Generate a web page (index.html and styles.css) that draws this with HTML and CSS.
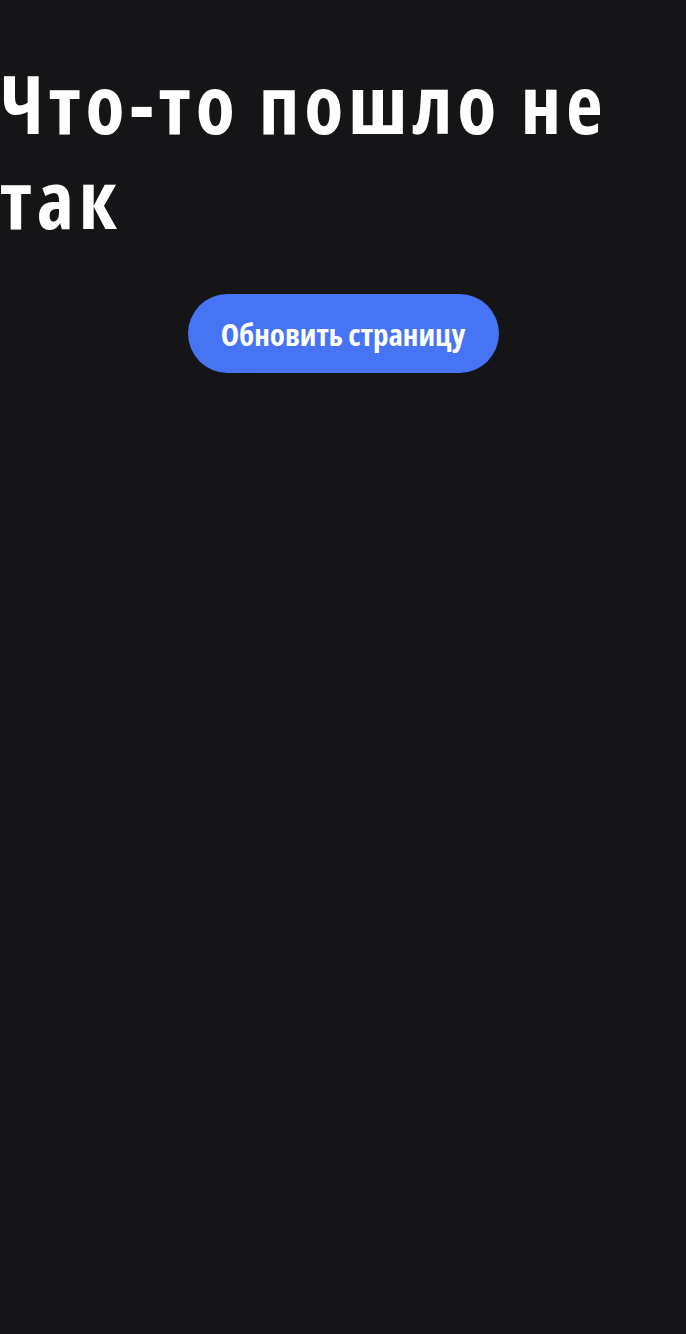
FILE: index.html
```html
<!DOCTYPE html>
<html lang="ru">
<head>
<meta charset="utf-8">
<link rel="stylesheet" href="styles.css">
</head>
<body>
<main class="page">
  <h1 class="title">Что-то пошло не так</h1>
  <div class="actions">
    <button class="reload">Обновить страницу</button>
  </div>
</main>
</body>
</html>
```
FILE: styles.css
```css
html, body {
  margin: 0;
  padding: 0;
  background: #151517;
  height: 100%;
}
.page {
  padding-top: 55px;
}
.title {
  margin: 0;
  color: #ffffff;
  font-family: "Open Sans", "DejaVu Sans Condensed", sans-serif;
  font-weight: 700;
  font-stretch: 75%;
  font-size: 80px;
  line-height: 95px;
  letter-spacing: 5px;
}
.actions {
  display: flex;
  justify-content: center;
  margin-top: 49px;
}
.reload {
  width: 311px;
  height: 79px;
  border: none;
  border-radius: 40px;
  background: #4674f5;
  color: #ffffff;
  font-family: "Open Sans", "DejaVu Sans Condensed", sans-serif;
  font-weight: 700;
  font-stretch: 80%;
  font-size: 31px;
  padding: 0;
}
```
